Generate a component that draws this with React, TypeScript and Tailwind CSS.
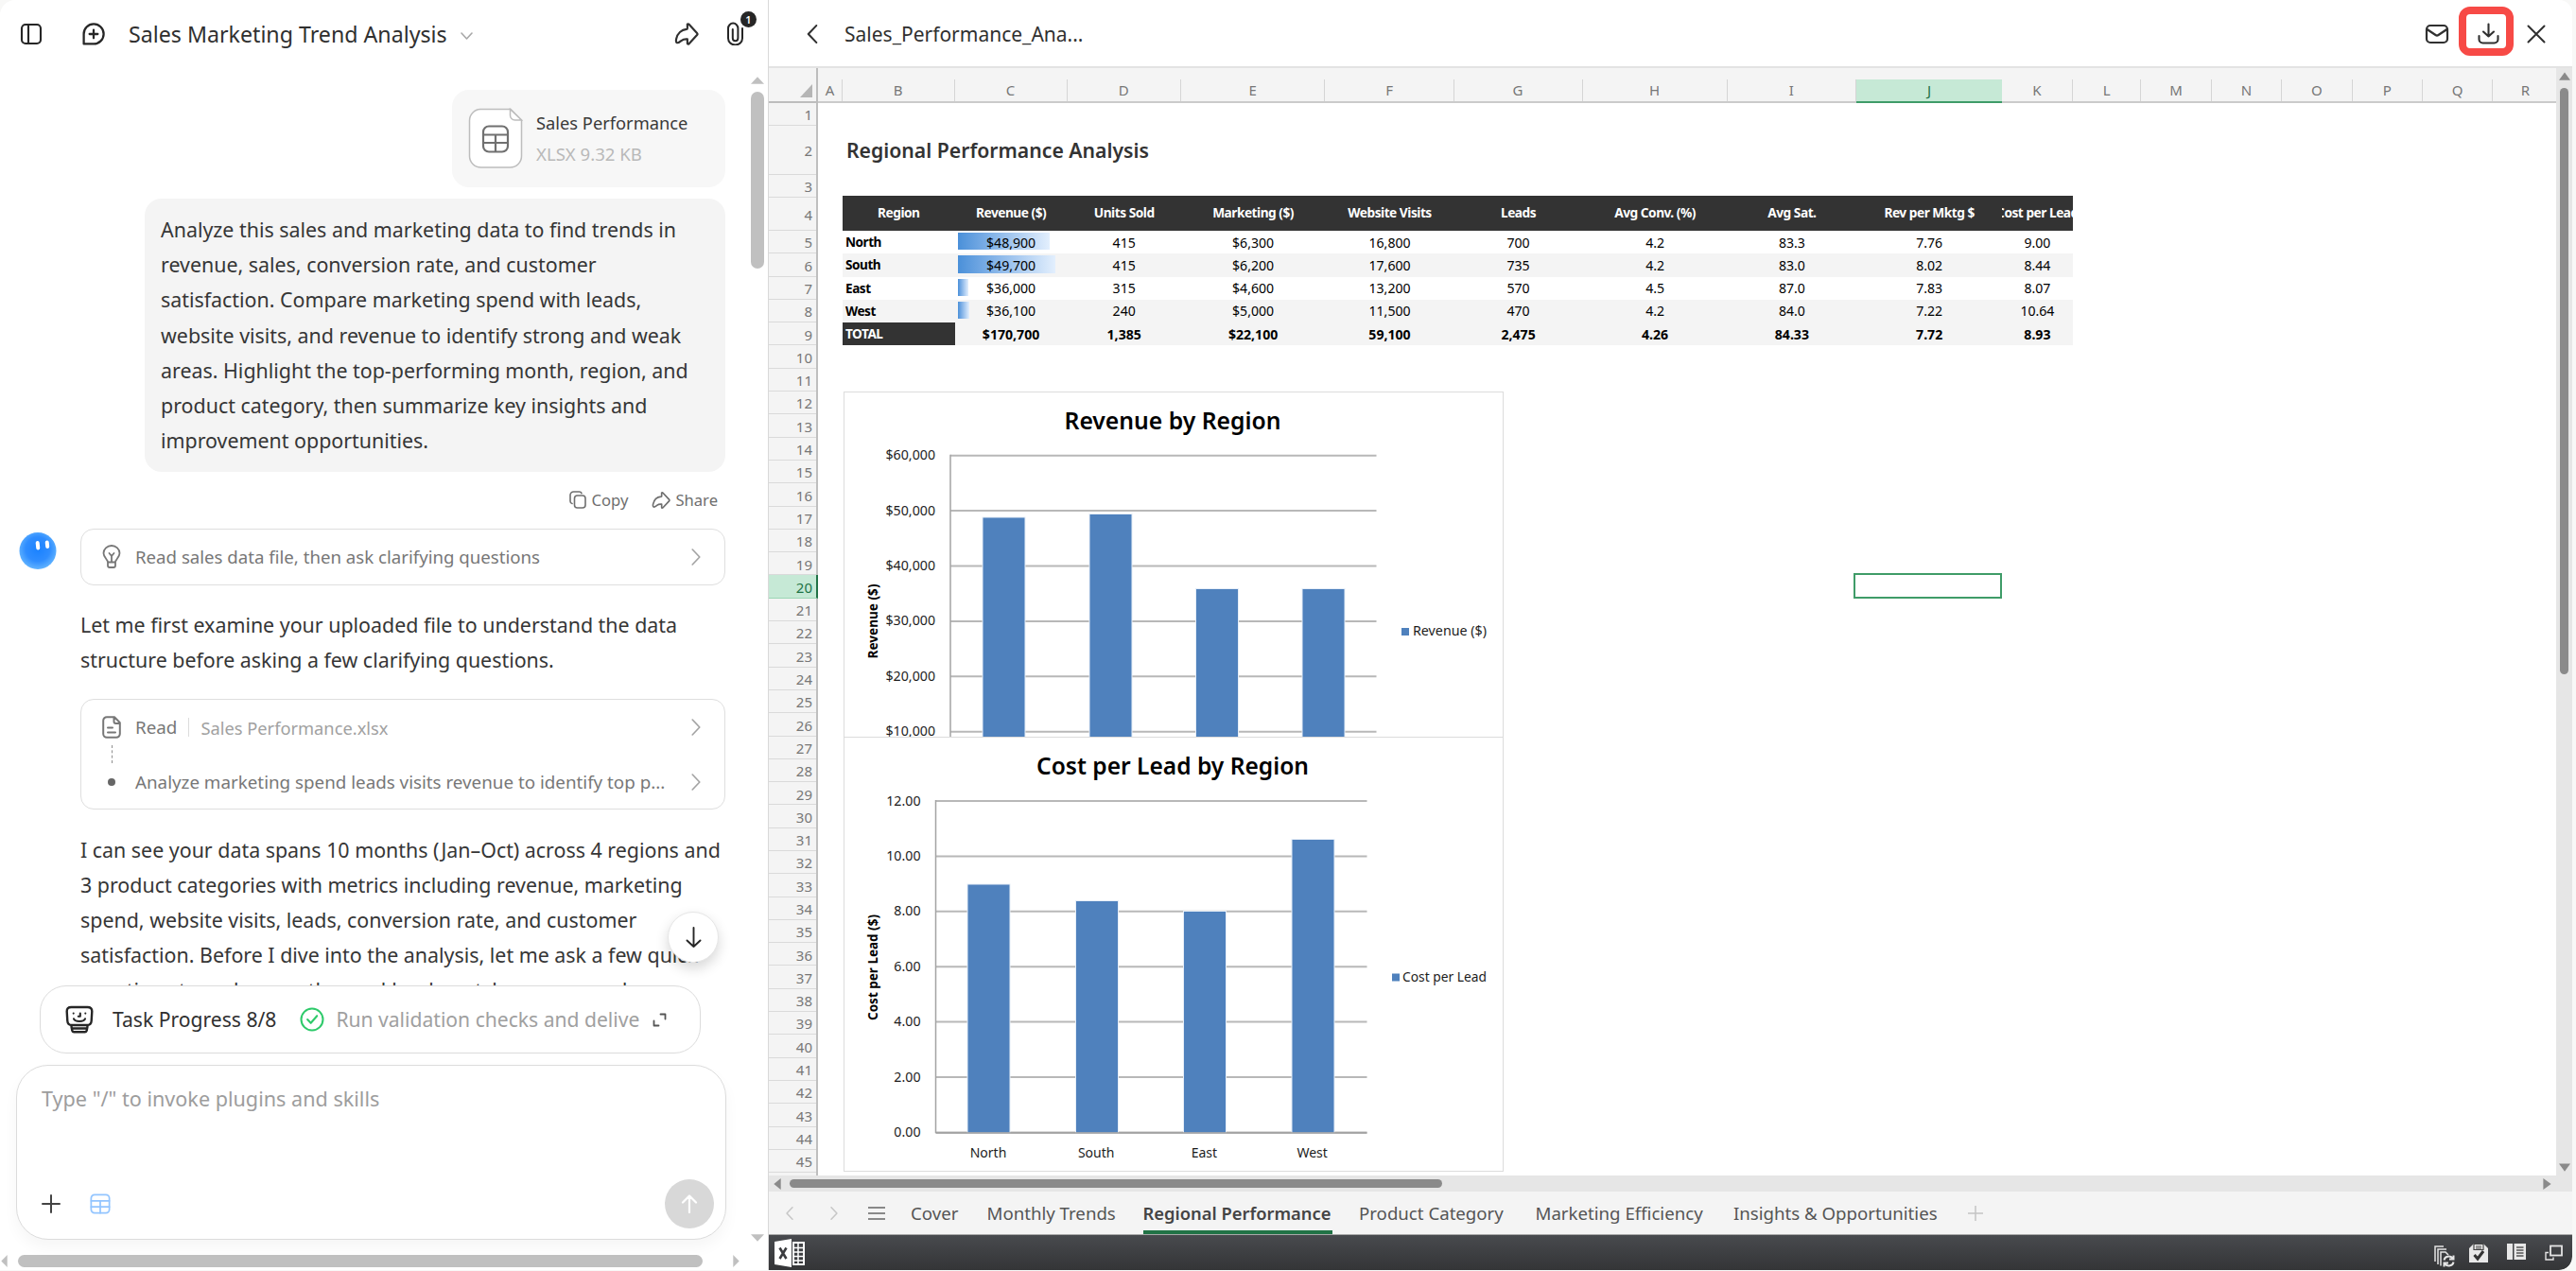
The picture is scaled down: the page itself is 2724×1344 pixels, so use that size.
import type { ReactNode } from 'react';

/* ---------- data ---------- */

const COLUMNS = [
  { name: 'A', w: 26 },
  { name: 'B', w: 118.5 },
  { name: 'C', w: 119.2 },
  { name: 'D', w: 120 },
  { name: 'E', w: 152.8 },
  { name: 'F', w: 136.1 },
  { name: 'G', w: 136 },
  { name: 'H', w: 153 },
  { name: 'I', w: 136.6 },
  { name: 'J', w: 154 },
  { name: 'K', w: 74.5 },
  { name: 'L', w: 72.8 },
  { name: 'M', w: 74.3 },
  { name: 'N', w: 74.2 },
  { name: 'O', w: 74.6 },
  { name: 'P', w: 74.3 },
  { name: 'Q', w: 74.3 },
  { name: 'R', w: 68.8 },
];

const ROW_H = 24.3;
const ROW_HEIGHTS: Record<number, number> = { 2: 51.6, 3: 24.5, 4: 34.6 };
const rowHeight = (n: number) => ROW_HEIGHTS[n] ?? ROW_H;
const ROWS = Array.from({ length: 45 }, (_, i) => i + 1);

const HEADERS = ['Region', 'Revenue ($)', 'Units Sold', 'Marketing ($)', 'Website Visits', 'Leads', 'Avg Conv. (%)', 'Avg Sat.', 'Rev per Mktg $', 'Cost per Lead'];

const REGIONS = [
  { cells: ['North', '$48,900', '415', '$6,300', '16,800', '700', '4.2', '83.3', '7.76', '9.00'], bar: 97 },
  { cells: ['South', '$49,700', '415', '$6,200', '17,600', '735', '4.2', '83.0', '8.02', '8.44'], bar: 103 },
  { cells: ['East', '$36,000', '315', '$4,600', '13,200', '570', '4.5', '87.0', '7.83', '8.07'], bar: 11 },
  { cells: ['West', '$36,100', '240', '$5,000', '11,500', '470', '4.2', '84.0', '7.22', '10.64'], bar: 12 },
];

const TOTAL = ['TOTAL', '$170,700', '1,385', '$22,100', '59,100', '2,475', '4.26', '84.33', '7.72', '8.93'];

/* ---------- icons ---------- */

type IconProps = { className?: string; children?: ReactNode; box?: string; sw?: number };

function Icon({ className, children, box = '0 0 24 24', sw = 2 }: IconProps) {
  return (
    <svg className={className} viewBox={box} fill="none" stroke="currentColor" strokeWidth={sw} strokeLinecap="round" strokeLinejoin="round">
      {children}
    </svg>
  );
}

const ShareIcon = ({ className }: IconProps) => (
  <Icon className={className}>
    <path d="M12.8 2.4c.5-.5 1-.4 1.400 0l8 8.600a1.500 1.500 0 0 1 0 2l-8 8.600c-.5.500-1.400.200-1.400-.6v-4c-2.300-.2-4.300.2-6 1.500C5.500 19.500 4.200 21 2.700 20.500c-1.300-.5-1-2.500-.7-3.800C3.100 11.600 7 7.800 12 7.300c.5 0 .8-.3.8-.8z" />
  </Icon>
);

const SheetIcon = ({ className, sw = 2 }: IconProps) => (
  <Icon className={className} sw={sw}>
    <rect x="1.5" y="1.5" width="21" height="21" rx="4" />
    <path d="M1.5 8.5h21M1.5 15.5h21M12 8.5v14" />
  </Icon>
);

const ChevronRight = ({ className, sw = 1.6 }: IconProps) => (
  <Icon className={className} box="0 0 10 18" sw={sw}>
    <path d="m1.2 1 7.6 8-7.6 8" />
  </Icon>
);

const ChevronLeft = ({ className, sw = 1.6 }: IconProps) => (
  <Icon className={className} box="0 0 10 18" sw={sw}>
    <path d="M8.8 1 1.2 9l7.6 8" />
  </Icon>
);

const Triangle = ({ className, d }: { className: string; d: string }) => (
  <svg className={className} viewBox="0 0 12 12" fill="currentColor" preserveAspectRatio="none">
    <path d={d} />
  </svg>
);

const UP = 'M6 .5 12 11.5H0z';
const DOWN = 'M6 11.5 0 .5h12z';
const LEFT = 'M.5 6 11.5 0v12z';
const RIGHT = 'M11.5 6 .5 0v12z';

/* ---------- chat panel ---------- */

function ChatHeader() {
  return (
    <div className="h-[72px] shrink-0 flex items-center pl-[21px] pr-5 text-[#262626]">
      <Icon className="w-6 h-6" sw={2.1}>
        <rect x="2" y="2" width="20" height="20" rx="4" />
        <path d="M9 2v20" />
      </Icon>
      <Icon className="w-[26px] h-[26px] ml-[41px]" sw={2.1}>
        <path d="M2.4 21.6V12A9.7 9.7 0 1 1 12 21.6zM12 8v8M8 12h8" />
      </Icon>
      <h1 className="ml-6 text-[23.2px] leading-8 text-[#303030] whitespace-nowrap">Sales Marketing Trend Analysis</h1>
      <Icon className="w-[13px] h-[8px] ml-[14px] mt-[3px] text-[#a8a8a8]" box="0 0 13 8" sw={1.6}>
        <path d="m1 1 5.5 6L12 1" />
      </Icon>
      <ShareIcon className="w-[26px] h-[26px] ml-auto text-[#303030]" />
      <div className="relative ml-[29px] mr-[4px] w-[20px] h-[26px]">
        <Icon className="w-[18px] h-[25px]" box="0 0 18 25" sw={2}>
          <path d="M17 7v10.500a7.500 7 0 0 1-15 0V7a5.200 5.400 0 0 1 10.400 0v10.200a2.800 3 0 0 1-5.600 0V8" />
        </Icon>
        <span className="absolute left-[15px] -top-[11px] w-[17px] h-[17px] rounded-full bg-[#262626] text-white text-[11px] leading-[17px] font-semibold text-center">1</span>
      </div>
    </div>
  );
}

function FileCard() {
  return (
    <div className="ml-auto w-[289px] h-[103px] rounded-[18px] bg-[#f7f7f7] flex items-center pl-[17px]">
      <svg className="w-[58px] h-[65px]" viewBox="0 0 58 65" fill="none">
        <path d="M13 1.5h32L56.5 13v38a12 12 0 0 1-12 12h-31a12 12 0 0 1-12-12v-37.500a12 12 0 0 1 11.500-12z" fill="#fff" stroke="#bdbdbd" strokeWidth="1.5" />
        <path d="M44.500 1.500V8a5 5 0 0 0 5 5h7z" fill="#fff" stroke="#bdbdbd" strokeWidth="1.5" />
        <g stroke="#707070" strokeWidth="2.2">
          <rect x="16" y="19.5" width="26" height="27" rx="6" />
          <path d="M16 28.500h26M16 37h26M29 28.500v18" />
        </g>
      </svg>
      <div className="ml-[14px]">
        <p className="text-[18.3px] leading-[33px] text-[#3a3a3a]">Sales Performance</p>
        <p className="text-[18.6px] leading-[33px] text-[#b9b9b9]">XLSX 9.32 KB</p>
      </div>
    </div>
  );
}

function ChatThread() {
  return (
    <div className="h-[970px] overflow-hidden pt-[22.5px] pl-[85px] pr-[13px] text-[21.4px] leading-[37.2px] text-[#363636] whitespace-nowrap">
      <FileCard />
      <div className="ml-auto mt-3 w-[614px] h-[289px] rounded-[18px] bg-[#f4f4f4] pt-[14.5px] pl-[17px]">
        Analyze this sales and marketing data to find trends in<br />
        revenue, sales, conversion rate, and customer<br />
        satisfaction. Compare marketing spend with leads,<br />
        website visits, and revenue to identify strong and weak<br />
        areas. Highlight the top-performing month, region, and<br />
        product category, then summarize key insights and<br />
        improvement opportunities.
      </div>

      {/* Message actions */}
      <div className="mt-5 h-5 flex items-center justify-end pr-[8px] text-[16.6px] leading-5 text-[#6f6f6f]">
        <Icon className="w-[18px] h-[19px] mr-[6px]" box="0 0 18 19" sw={1.6}>
          <rect x="5.5" y="5" width="11.5" height="13" rx="3" />
          <path d="M3 13.500A2.600 2.600 0 0 1 1 11V4.500A3.500 3.500 0 0 1 4.500 1h6A2.600 2.600 0 0 1 13 2.600" />
        </Icon>
        Copy
        <ShareIcon className="w-[20px] h-[20px] ml-[25px] mr-[5px]" />
        Share
      </div>

      <div className="relative mt-5 w-[682px] h-[60px] rounded-[14px] border border-[#dedede] flex items-center pl-[22px] pr-[25px] text-[18.65px] text-[#777]">
        <svg className="absolute -left-[67px] top-[1px] w-[42px] h-[42px]" viewBox="0 0 42 42">
          <defs>
            <radialGradient id="face" cx="0.5" cy="0.45" r="0.55">
              <stop offset="0" stopColor="#1a82ff" />
              <stop offset="0.6" stopColor="#2f8dff" />
              <stop offset="1" stopColor="#62b4ff" />
            </radialGradient>
          </defs>
          <circle cx="21" cy="21.5" r="19.5" fill="url(#face)" />
          <rect x="19" y="11" width="4" height="9.5" rx="2" fill="#fff" transform="rotate(-6 21 16)" />
          <rect x="29" y="10.5" width="4" height="8.5" rx="2" fill="#fff" transform="rotate(-6 31 15)" />
        </svg>
        <Icon className="w-5 h-[25px] mr-[15px]" box="0 0 20 25" sw={1.8}>
          <path d="M6 18.500c0-3-4.500-5-4.500-9.500a8.500 8 0 0 1 17 0c0 4.500-4.500 6.500-4.500 9.500zM6 18.500V22a2 2 0 0 0 2 2h4a2 2 0 0 0 2-2v-3.500M7.500 9l2.500 3 2.500-3M10 12v6" />
        </Icon>
        Read sales data file, then ask clarifying questions
        <ChevronRight className="w-[10px] h-[18px] ml-auto text-[#a2a2a2]" />
      </div>

      <p className="mt-[23.5px]">
        Let me first examine your uploaded file to understand the data<br />
        structure before asking a few clarifying questions.
      </p>

      <div className="mt-[23px] w-[682px] h-[116.5px] rounded-[14px] border border-[#dedede] pl-[22px] pr-[25px] pt-3 text-[18.8px] text-[#777]">
        <div className="h-[34px] flex items-center">
          <Icon className="w-5 h-6 mr-[15px]" box="0 0 20 24" sw={2}>
            <path d="M5 1.200h8l5.800 6V19a3.800 3.800 0 0 1-3.800 3.800H5A3.800 3.800 0 0 1 1.200 19V5A3.800 3.800 0 0 1 5 1.200zM12.500 1.500V6a2 2 0 0 0 2 2h4M6 12.500h5M6 17.500h8" />
          </Icon>
          Read
          <span className="w-px h-5 bg-[#dcdcdc] mx-[12px]" />
          <span className="text-[18.3px] text-[#a1a1a1]">Sales Performance.xlsx</span>
          <ChevronRight className="w-[10px] h-[18px] ml-auto text-[#a2a2a2]" />
        </div>
        <div className="ml-[10px] mt-[2px] h-[19px] border-l border-dashed border-[#8f8f8f]" />
        <div className="mt-[5px] h-[30px] flex items-center">
          <span className="w-2 h-2 ml-[6px] mr-[21px] rounded-full bg-[#666]" />
          Analyze marketing spend leads visits revenue to identify top p...
          <ChevronRight className="w-[10px] h-[18px] ml-auto text-[#a2a2a2]" />
        </div>
      </div>

      <p className="mt-[23.6px]">
        I can see your data spans 10 months (Jan–Oct) across 4 regions and<br />
        3 product categories with metrics including revenue, marketing<br />
        spend, website visits, leads, conversion rate, and customer<br />
        satisfaction. Before I dive into the analysis, let me ask a few quick<br />
        questions to make sure the workbook matches your needs.
      </p>
    </div>
  );
}

function TaskPill() {
  return (
    <div className="ml-[42px] w-[699px] h-[72px] shrink-0 rounded-[28px] border border-[#dcdcdc] bg-white flex items-center pl-[26px] text-[21.1px] whitespace-nowrap">
      <Icon className="w-[30px] h-[30px] text-[#262626]" box="0 0 30 30" sw={2.4}>
        <path d="M6.500 2h17C27 2 28.300 3.500 28.300 6.500l-.6 10c-.2 3.300-1.700 4.500-4.700 4.500H7c-3 0-4.500-1.200-4.700-4.500l-.6-10C1.700 3.500 3 2 6.500 2zM6.500 22.500l.8 4.300c.2 1 .8 1.400 1.700 1.400h12c.9 0 1.500-.4 1.700-1.400l.8-4.300M7 24.500h16" />
        <path d="M9 14.300c.6 2 2.200 2.700 6 2.700s5.400-.7 6-2.700M8.700 8.500v.1M21.300 8.500v.1M15.800 8.500v3.200h-2" strokeWidth="2.1" />
      </Icon>
      <span className="ml-5 text-[#303030]">Task Progress 8/8</span>
      <Icon className="w-[26px] h-[26px] ml-[25px] text-[#2fca6b]" sw={1.9}>
        <circle cx="12" cy="12" r="10.6" />
        <path d="m7.500 12 3.300 3.500 6-7" />
      </Icon>
      <span className="ml-[12px] w-[325px] text-[#a0a0a0]">Run validation checks and delive</span>
      <Icon className="w-[15px] h-[15px] ml-[10px] text-[#555]" box="0 0 15 15" sw={1.8}>
        <path d="M8.500 1.500h5v5M1.500 8.500v5h5" />
      </Icon>
    </div>
  );
}

function Composer() {
  return (
    <div className="mt-[12px] ml-[17px] w-[751px] h-[185px] rounded-[34px] border border-[#dcdcdc] shadow-[0_8px_16px_rgba(0,0,0,0.04)] bg-white flex flex-col justify-between pt-[16px] pl-[26px] pr-[12px] pb-[11px]">
      <span className="text-[21.6px] leading-[37px] text-[#9d9d9d]">Type "/" to invoke plugins and skills</span>
      <div className="flex items-center">
        <Icon className="w-5 h-5 text-[#444]" box="0 0 20 20" sw={2}>
          <path d="M10 1v18M1 10h18" />
        </Icon>
        <SheetIcon className="w-[22px] h-[22px] ml-[31px] text-[#93c5ff]" sw={1.9} />
        <span className="ml-auto w-[52px] h-[52px] rounded-full bg-[#d8d8d8] flex items-center justify-center text-white">
          <Icon className="w-5 h-5" box="0 0 20 20" sw={2.2}>
            <path d="M10 19V1.500M3 8.500l7-7 7 7" />
          </Icon>
        </span>
      </div>
    </div>
  );
}

function ChatPanel() {
  return (
    <section className="w-[812px] shrink-0 h-[1343px] flex flex-col bg-white rounded-tl-[16px]">
      <ChatHeader />
      <div className="flex h-[1246px]">
        <div className="relative w-[780px]">
          <ChatThread />
          <span className="absolute left-[706px] top-[892px] w-[54px] h-[54px] rounded-full bg-white border border-[#e6e6e6] shadow-[0_6px_14px_rgba(0,0,0,0.16)] flex items-center justify-center text-[#262626]">
            <Icon className="w-[17px] h-[22px]" box="0 0 17 22" sw={1.9}>
              <path d="M8.500 1v20M1.500 14.500l7 6.500 7-6.500" />
            </Icon>
          </span>
          <TaskPill />
          <Composer />
        </div>
        <div className="w-[14px] ml-[14px] pt-[9px] pb-[5px] flex flex-col text-[#c0c0c0]">
          <Triangle className="w-[14px] h-[8px]" d={UP} />
          <div className="mt-[8px] h-[187px] rounded-full bg-[#c0c0c0]" />
          <Triangle className="w-[14px] h-[8px] mt-auto" d={DOWN} />
        </div>
      </div>
      <div className="mt-[8px] h-[14px] flex items-center text-[#c0c0c0]">
        <Triangle className="w-[7px] h-[13px] ml-px" d={LEFT} />
        <div className="ml-[11px] w-[724px] h-[13px] rounded-full bg-[#c0c0c0]" />
        <Triangle className="w-[7px] h-[13px] ml-[32px]" d={RIGHT} />
      </div>
    </section>
  );
}

/* ---------- spreadsheet ---------- */

function SheetHeader() {
  return (
    <div className="h-[72px] shrink-0 border-b-2 border-[#e3e3e3] flex items-center pt-px pl-[40px] pr-[28px] text-[#303030]">
      <ChevronLeft className="w-[12px] h-[20px]" sw={1.9} />
      <h2 className="ml-[28px] text-[21px] leading-8">Sales_Performance_Ana...</h2>
      <Icon className="w-[26px] h-[26px] ml-auto" box="0 0 26 26" sw={2.2}>
        <rect x="2" y="4" width="22" height="18" rx="4" />
        <path d="m2.500 8 9 6a2.600 2.600 0 0 0 3 0l9-6" />
      </Icon>
      <div className="ml-[10px] mt-[-5px] w-[58px] h-[52px] rounded-[12px] border-8 border-[#f74a46] flex items-center justify-center">
        <Icon className="w-[23px] h-[23px] mt-[4px] ml-[4px] shrink-0" box="0 0 23 23" sw={2.1}>
          <path d="M1.500 14v3.500A4 4 0 0 0 5.500 21.500h12a4 4 0 0 0 4-4V14M11.500 1.500v13M6 9.500l5.500 5 5.500-5" />
        </Icon>
      </div>
      <Icon className="w-[20px] h-[20px] ml-[14px]" box="0 0 20 20" sw={2}>
        <path d="m1.500 1.500 17 17M18.500 1.500l-17 17" />
      </Icon>
    </div>
  );
}

function ColumnHeads() {
  return (
    <div className="h-[37px] shrink-0 flex bg-[#f4f4f4] text-[15px] leading-none text-[#777]">
      <div className="w-[52px] shrink-0 border-r-2 border-b-2 border-[#bdbdbd] flex items-end justify-end pb-[4px] pr-[4px]">
        <svg className="w-[13px] h-[14px]" viewBox="0 0 13 14">
          <path d="M13 0v14H0z" fill="#b5b5b5" />
        </svg>
      </div>
      <div className="flex items-end border-b-2 border-[#cbcbcb]">
        {COLUMNS.map((c) => (
          <div
            key={c.name}
            style={{ width: c.w }}
            className={
              c.name === 'J'
                ? 'h-[25px] -mb-[2px] flex items-center justify-center bg-[#c6e9d6] border-b-2 border-[#3f9c68] text-[#217346]'
                : c.name === 'R'
                  ? 'h-[23px] flex items-center justify-center'
                  : 'h-[23px] flex items-center justify-center border-r border-[#d5d5d5]'
            }>
            {c.name}
          </div>
        ))}
      </div>
    </div>
  );
}

function RowHeads() {
  return (
    <div className="w-[52px] shrink-0 bg-[#f4f4f4] border-r-2 border-[#bfbfbf] text-[15px] text-right text-[#777]">
      {ROWS.map((n) => (
        <div
          key={n}
          style={{ height: rowHeight(n) }}
          className={
            n === 20
              ? 'flex items-center justify-end pr-[4px] pt-[2px] -mr-[2px] border-r-2 border-r-[#217346] border-b border-b-[#9bd5b5] bg-[#c6e9d6] text-[#217346]'
              : 'flex items-center justify-end pr-[4px] pt-[2px] border-b border-[#dadada]'
          }>
          {n}
        </div>
      ))}
    </div>
  );
}

function TableRow({ cells, className, cell, bar, h }: { cells: string[]; className: string; cell: string; bar?: number; h: number }) {
  return (
    <div style={{ height: h }} className={`ml-[26px] w-[1300.7px] flex ${className}`}>
      {cells.map((text, i) => (
        <div
          key={i}
          style={{ width: COLUMNS[i + 1].w }}
          className={`relative shrink-0 flex items-center overflow-hidden whitespace-nowrap ${i === 0 ? cell : 'justify-center'}`}>
          {i === 1 && bar !== undefined && (
            <span style={{ width: bar }} className="absolute left-[3px] top-[2px] bottom-[4px] bg-linear-to-r from-[#4a90d9] to-[#e3effd]" />
          )}
          <span className="relative">{text}</span>
        </div>
      ))}
    </div>
  );
}

/* ---------- charts ---------- */

type ChartProps = {
  title: string;
  titleW: number;
  axisTitle: string;
  axisW: number;
  axisX: number;
  axisY: number;
  right: number;
  top: number;
  labels: string[];
  bars: { x: number; y: number }[];
  base: number;
  categories?: string[];
  legend: string;
  legendX: number;
  legendY: number;
  legendW: number;
};

const CHART_H = 460;
const STEP = 58.4;

function BarChart(p: ChartProps) {
  return (
    <svg className="block font-['Noto_Sans',sans-serif]" width="698" height={CHART_H} viewBox={`0 0 698 ${CHART_H}`}>
      <rect x="0.5" y="0.5" width="697" height={CHART_H - 1} fill="#fff" stroke="#dcdcdc" />
      <text x="348" y="40" fontSize="26" fontWeight="650" textAnchor="middle" textLength={p.titleW} lengthAdjust="spacingAndGlyphs">{p.title}</text>
      {p.labels.map((l, i) => (
        <g key={l}>
          <line x1={p.axisX} x2={p.right} y1={p.top + i * STEP} y2={p.top + i * STEP} stroke="#b8b8b8" strokeWidth="2" />
          <text x={p.axisX - 16} y={p.top + i * STEP + 4.5} fontSize="14.2" textAnchor="end" fill="#1c1c1c">{l}</text>
        </g>
      ))}
      <line x1={p.axisX} x2={p.axisX} y1={p.top - 1} y2={p.base} stroke="#a3a3a3" strokeWidth="1.5" />
      {p.bars.map((b) => (
        <rect key={b.x} x={b.x - 0.5} y={b.y} width="45" height={p.base - b.y} fill="#4f81bd" stroke="#e6eef8" />
      ))}
      {p.categories && <line x1={p.axisX} x2={p.right} y1={p.base} y2={p.base} stroke="#9c9c9c" strokeWidth="1.5" />}
      {p.categories?.map((c, i) => (
        <text key={c} x={153 + i * 114.2} y="445" fontSize="14" textAnchor="middle" fill="#1c1c1c">{c}</text>
      ))}
      <text transform={`translate(35.5 ${p.axisY}) rotate(-90)`} fontSize="13.5" fontWeight="700" textAnchor="middle" textLength={p.axisW} lengthAdjust="spacingAndGlyphs">{p.axisTitle}</text>
      <rect x={p.legendX} y={p.legendY} width="8" height="8" fill="#4f81bd" />
      <text x="680" y={p.legendY + 8} fontSize="14" textAnchor="end" textLength={p.legendW} lengthAdjust="spacingAndGlyphs" fill="#1c1c1c">{p.legend}</text>
    </svg>
  );
}

// the second chart sits on top of the lower part of the first one
function Charts() {
  return (
    <div className="absolute left-[27px] top-[305px] w-[698px]">
      <div className="h-[365px] overflow-hidden">
        <BarChart
          title="Revenue by Region"
          titleW={229}
          axisTitle="Revenue ($)"
          axisW={79}
          axisX={113}
          axisY={243}
          right={563.5}
          top={67.7}
          labels={['$60,000', '$50,000', '$40,000', '$30,000', '$20,000', '$10,000']}
          bars={[{ x: 147.5, y: 133 }, { x: 260.5, y: 129.5 }, { x: 373, y: 208.5 }, { x: 485.5, y: 208.5 }]}
          base={420}
          legend="Revenue ($)"
          legendX={590}
          legendY={250}
          legendW={78}
        />
      </div>
      <BarChart
        title="Cost per Lead by Region"
        titleW={288}
        axisTitle="Cost per Lead ($)"
        axisW={112}
        axisX={97.5}
        axisY={244}
        right={553.5}
        top={68}
        labels={['12.00', '10.00', '8.00', '6.00', '4.00', '2.00', '0.00']}
        bars={[{ x: 131.5, y: 156 }, { x: 246, y: 173.5 }, { x: 360, y: 184.5 }, { x: 474.5, y: 108.5 }]}
        base={419}
        categories={['North', 'South', 'East', 'West']}
        legend="Cost per Lead"
        legendX={580}
        legendY={250.5}
        legendW={89}
      />
    </div>
  );
}

function Grid() {
  return (
    <div className="relative w-[1838px] h-[1134px] overflow-hidden bg-white text-[14.1px] text-black">
      <div className="h-[24.3px]" />
      <div className="h-[51.6px] pl-[30px] flex items-center text-[21.2px] font-semibold text-[#333]">Regional Performance Analysis</div>
      <div className="h-[22.6px]" />
      <TableRow h={36.5} cells={HEADERS} cell="justify-center" className="bg-[#333] text-white font-bold text-[13.7px] tracking-[-0.035em]" />
      {REGIONS.map((r, i) => (
        <TableRow
          key={r.cells[0]}
          h={ROW_H}
          cells={r.cells}
          bar={r.bar}
          className={i % 2 ? 'bg-[#f4f4f4]' : 'bg-white'}
          cell="pl-[3px] font-bold text-[13.6px] tracking-[-0.035em]"
        />
      ))}
      <TableRow h={ROW_H} cells={TOTAL} className="bg-[#f4f4f4] font-bold" cell="pl-[3px] bg-[#333] text-white text-[13.6px] tracking-[-0.035em]" />
      <Charts />
      {/* Selected cell */}
      <div className="absolute left-[1095px] top-[497px] w-[157px] h-[27px] border-2 border-[#3f9c68]" />
    </div>
  );
}

function ExcelLogo() {
  return (
    <svg className="w-[32px] h-[32px]" viewBox="0 0 32 32">
      <path d="M0 4 18 1v30L0 28z" fill="#fff" />
      <path d="M20 5h11v23H20z" fill="none" stroke="#fff" strokeWidth="2" />
      <path d="M20 10.500h11M20 15h11M20 19.500h11M20 24h11M25 5v23" stroke="#fff" strokeWidth="1.5" />
      <path d="m5.500 10.500 7 11.500M12.500 10.500l-7 11.500" stroke="#3b3c3f" strokeWidth="2.6" />
    </svg>
  );
}

function StatusBar() {
  return (
    <div className="h-[37px] shrink-0 rounded-br-[14px] bg-linear-to-b from-[#484a4e] to-[#343537] flex items-center pl-[6px] pr-[10px] text-[#e4e4e4]">
      <ExcelLogo />
      <svg className="w-[22px] h-[23px] ml-auto mt-[8px]" viewBox="0 0 22 23" fill="none" stroke="currentColor" strokeWidth="1.5">
        <path d="M1 17V1h9M4 20V4h9M7 21.500V7h5l3 3" />
        <path d="M10.500 15.500a5 4.500 0 0 1 9-2M20.500 10.500v4H16M20.500 17.500a5 4.500 0 0 1-9 2M10.500 22.500v-4H15" strokeWidth="2" />
      </svg>
      <svg className="w-[20px] h-[21px] ml-[15px]" viewBox="0 0 20 21">
        <path d="M0 6 5 1h10l5 5v15H0z" fill="#e8e8e8" />
        <path d="M5 1.500h10v6H5zM7 4h6M7 6h6" fill="none" stroke="#444" strokeWidth="1.2" />
        <path d="m5.500 13 3.500 4 6-8" fill="none" stroke="#333" strokeWidth="3" />
      </svg>
      <svg className="w-[20px] h-[17px] ml-[20px] mb-[2px]" viewBox="0 0 20 17">
        <path d="M0 0h6v17H0zM7.500 0H20v17H7.500z" fill="#e8e8e8" />
        <path d="M10 4h7.500M10 7h7.500M10 10h7.500M10 13h7.500" stroke="#555" strokeWidth="1.4" />
      </svg>
      <svg className="w-[19px] h-[18px] ml-[20px]" viewBox="0 0 19 18" fill="none" stroke="currentColor" strokeWidth="1.8">
        <rect x="6" y="1.5" width="12" height="10" />
        <path d="M4 8.500H1v7.500h8v-2.500" strokeWidth="1.4" />
      </svg>
    </div>
  );
}

function SheetTabs() {
  return (
    <div className="h-[46px] shrink-0 bg-[#f4f4f4] border-b border-[#a8a8a8] flex items-stretch pl-[18px] text-[18.65px] text-[#555] whitespace-nowrap">
      <ChevronLeft className="w-[8px] h-[14px] self-center text-[#c6c6c6]" sw={1.9} />
      <ChevronRight className="w-[8px] h-[14px] self-center ml-[39px] text-[#c6c6c6]" sw={1.9} />
      <Icon className="w-[18px] h-[14px] self-center ml-[32px] text-[#666]" box="0 0 18 14" sw={1.7}>
        <path d="M0 1h18M0 7h18M0 13h18" />
      </Icon>
      <span className="flex items-center ml-[27px] w-[80.5px]">Cover</span>
      <span className="flex items-center w-[165px]">Monthly Trends</span>
      <span className="flex items-center w-[200px] pt-1 border-b-4 border-[#217346] text-[18.35px] font-semibold text-[#444]">Regional Performance</span>
      <span className="flex items-center ml-[28.5px] w-[186.5px]">Product Category</span>
      <span className="flex items-center w-[209.5px]">Marketing Efficiency</span>
      <span className="flex items-center w-[248px]">Insights &amp; Opportunities</span>
      <Icon className="w-[16px] h-[16px] self-center text-[#c4c4c4]" box="0 0 16 16" sw={1.5}>
        <path d="M8 0v16M0 8h16" />
      </Icon>
    </div>
  );
}

function SheetPanel() {
  return (
    <section className="w-[1908px] h-[1343px] flex flex-col border-l border-[#d9d9d9] bg-white rounded-tr-[14px] rounded-br-[14px] overflow-hidden">
      <SheetHeader />
      <div className="h-[1171px] flex shrink-0">
        <div className="w-[1890px] flex flex-col overflow-hidden">
          <ColumnHeads />
          <div className="flex h-[1134px] overflow-hidden">
            <RowHeads />
            <Grid />
          </div>
        </div>
        <div className="w-[17px] bg-[#e6e6e6] flex flex-col items-center text-[#8a8a8a] pt-[4px] pb-[4px]">
          <Triangle className="w-[12px] h-[9px]" d={UP} />
          <div className="mt-[8px] w-[9px] h-[620px] rounded-full bg-[#8a8a8a]" />
          <Triangle className="w-[12px] h-[9px] mt-auto" d={DOWN} />
        </div>
      </div>
      <div className="h-[17px] shrink-0 bg-[#e6e6e6] flex items-center pl-[5px] pr-[22px] text-[#8a8a8a]">
        <Triangle className="w-[8px] h-[12px]" d={LEFT} />
        <div className="ml-[9px] w-[690px] h-[9px] rounded-full bg-[#8a8a8a]" />
        <Triangle className="w-[9px] h-[12px] ml-auto" d={RIGHT} />
      </div>
      <SheetTabs />
      <StatusBar />
    </section>
  );
}

export default function App() {
  return (
    <main className="w-[2724px] h-[1344px] overflow-hidden flex bg-[#f8f8f7] font-['Noto_Sans','Open_Sans',sans-serif]">
      <ChatPanel />
      <SheetPanel />
    </main>
  );
}
